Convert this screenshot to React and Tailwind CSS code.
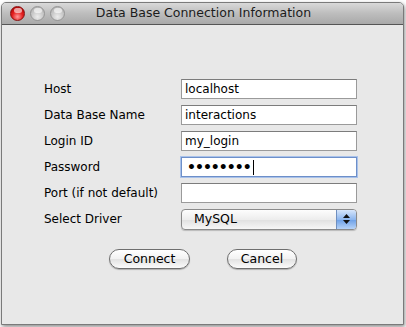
import React from "react";

const font = { fontFamily: '"DejaVu Sans", "Lucida Grande", sans-serif' };

function Light({ red }) {
  return (
    <div
      className={
        "w-[15px] h-[15px] rounded-full border " +
        (red
          ? "border-[#8a1010] bg-[radial-gradient(circle_at_50%_75%,#ff9a9a_0%,#e42020_45%,#a00000_100%)]"
          : "border-[#959595] bg-[radial-gradient(circle_at_50%_75%,#ececec_0%,#c8c8c8_50%,#a8a8a8_100%)]")
      }
    >
      <div className="mx-auto mt-[1px] w-[8px] h-[5px] rounded-full bg-white/60" />
    </div>
  );
}

function Field({ value, focused, password }) {
  return (
    <div
      className={
        "w-[176px] h-[20px] bg-white flex items-center px-[3px] text-[12px] text-black " +
        (focused
          ? "border border-[#6d8fc9] shadow-[0_0_0_1px_#a9c2ea]"
          : "border border-[#9a9a9a] border-t-[#7c7c7c]")
      }
    >
      {password ? (
        <span className="flex items-center pl-[2px]">
          <span className="text-[14px] leading-none font-bold tracking-[-1px]">{"••••••••"}</span>
          <span className="ml-[2px] w-px h-[15px] bg-black" />
        </span>
      ) : (
        <span>{value}</span>
      )}
    </div>
  );
}

function Row({ label, children }) {
  return (
    <div className="flex items-center h-[20px]">
      <div className="w-[137px] text-[12px] text-black">{label}</div>
      {children}
    </div>
  );
}

function Button({ children, w }) {
  return (
    <div
      className={
        w +
        " h-[20px] rounded-full border border-[#6e6e6e] bg-[linear-gradient(#ffffff,#f2f2f2_50%,#e2e2e2_51%,#fbfbfb)] shadow-[0_1px_1px_rgba(0,0,0,0.25)] flex items-center justify-center text-[12.5px] text-black"
      }
    >
      {children}
    </div>
  );
}

export default function App() {
  return (
    <div className="w-[406px] h-[327px] bg-white overflow-hidden" style={font}>
      <div className="ml-[1px] mt-[2px] w-[403px] h-[323px] rounded-t-[5px] border border-[#7a7a7a] bg-[#e8e8e8] shadow-[1px_2px_4px_rgba(0,0,0,0.45)] flex flex-col overflow-hidden">
        <div className="h-[22px] shrink-0 border-b border-[#555] bg-[linear-gradient(#d9d9d9,#bdbdbd_50%,#a9a9a9)] flex items-center relative">
          <div className="flex items-center gap-[5px] pl-[8px]">
            <Light red />
            <Light />
            <Light />
          </div>
          <div className="absolute inset-0 flex items-center justify-center text-[12.5px] text-[#1c1c1c] pl-[2px]">
            Data Base Connection Information
          </div>
        </div>
        <div className="flex flex-col pt-[54px] pl-[42px] gap-[6px]">
          <Row label="Host">
            <Field value="localhost" />
          </Row>
          <Row label="Data Base Name">
            <Field value="interactions" />
          </Row>
          <Row label="Login ID">
            <Field value="my_login" />
          </Row>
          <Row label="Password">
            <Field focused password />
          </Row>
          <Row label="Port (if not default)">
            <Field value="" />
          </Row>
          <Row label="Select Driver">
            <div className="w-[176px] h-[21px] rounded-[4px] border border-[#8a8a8a] bg-[linear-gradient(#fdfdfd,#ededed_50%,#e0e0e0_51%,#f7f7f7)] shadow-[0_1px_1px_rgba(0,0,0,0.2)] flex overflow-hidden">
              <div className="flex-1 flex items-center pl-[12px] text-[12.5px] text-black">MySQL</div>
              <div className="w-[20px] border-l border-[#6f8fbf] bg-[linear-gradient(#d7e6fb,#8db6ee_50%,#6b9fe6_51%,#b7d3f7)] flex flex-col items-center justify-center gap-[2px]">
                <svg width="7" height="4" viewBox="0 0 7 4"><path d="M3.5 0L7 4H0z" fill="#111" /></svg>
                <svg width="7" height="4" viewBox="0 0 7 4"><path d="M0 0h7L3.5 4z" fill="#111" /></svg>
              </div>
            </div>
          </Row>
          <div className="flex pt-[14px] pl-[65px] gap-[37px]">
            <Button w="w-[81px]">Connect</Button>
            <Button w="w-[70px]">Cancel</Button>
          </div>
        </div>
      </div>
    </div>
  );
}
